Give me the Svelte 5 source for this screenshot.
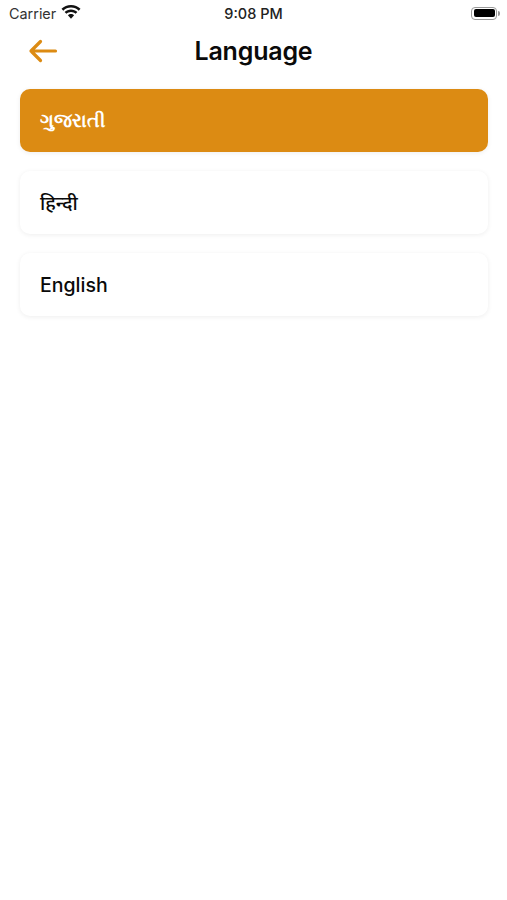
<script lang="ts">
  const languages = [
    { id: 'gu', label: 'ગુજરાતી' },
    { id: 'hi', label: 'हिन्दी' },
    { id: 'en', label: 'English' },
  ];

  let selected = $state('gu');
</script>

<div class="screen">
  <div class="status-bar">
    <div class="status-left">
      <span class="carrier">Carrier</span>
      <svg class="wifi" width="20" height="15" viewBox="0 0 20 15">
        <path d="M10 2.6c3 0 5.700 1.200 7.700 3.100l1.800-1.900C17 1.400 13.700 0 10 0S3 1.400.5 3.800l1.800 1.900C4.300 3.800 7 2.600 10 2.600z" fill="#111" />
        <path d="M10 7c1.800 0 3.400.7 4.600 1.800l1.800-1.900C14.700 5.400 12.500 4.400 10 4.400s-4.700 1-6.400 2.500l1.800 1.900C6.600 7.700 8.200 7 10 7z" fill="#111" />
        <path d="M10 9c-1.200 0-2.300.5-3.100 1.200L10 13.800l3.100-3.600C12.300 9.500 11.200 9 10 9z" fill="#111" />
      </svg>
    </div>
    <span class="time">9:08 PM</span>
    <div class="battery">
      <div class="battery-body"><div class="battery-fill"></div></div>
      <div class="battery-cap"></div>
    </div>
  </div>

  <header class="nav">
    <button class="back" type="button" aria-label="Back">
      <svg width="30" height="26" viewBox="0 0 30 26">
        <path d="M27.500 13H3M12.500 3.500 3 13l9.500 9.500" fill="none" stroke="#dc8b13" stroke-width="3.200" stroke-linecap="round" stroke-linejoin="round" />
      </svg>
    </button>
    <h1>Language</h1>
  </header>

  <div class="list">
    {#each languages as lang (lang.id)}
      <button
        class="item"
        class:active={selected === lang.id}
        type="button"
        onclick={() => (selected = lang.id)}
      >
        {lang.label}
      </button>
    {/each}
  </div>
</div>

<style>
  :global(body) {
    margin: 0;
    background: #fff;
  }

  .screen {
    height: 900px;
    background: #fff;
    font-family: Inter, "Liberation Sans", "Noto Sans", sans-serif;
    color: #0a0a0a;
    overflow: hidden;
  }

  .status-bar {
    display: flex;
    align-items: center;
    justify-content: space-between;
    height: 27px;
    padding: 0 7px 0 9px;
    position: relative;
  }

  .status-left {
    display: flex;
    align-items: center;
    gap: 5px;
  }

  .carrier {
    font-size: 14.400px;
    color: #333;
  }

  .wifi {
    margin-top: -2px;
  }

  .time {
    position: absolute;
    left: 0;
    right: 0;
    text-align: center;
    font-size: 14.500px;
    font-weight: 500;
    color: #222;
  }

  .battery {
    display: flex;
    align-items: center;
    gap: 1px;
    margin-top: -1px;
  }

  .battery-body {
    width: 26px;
    height: 13px;
    box-sizing: border-box;
    border: 1.500px solid #999;
    border-radius: 4px;
    padding: 1.500px;
  }

  .battery-fill {
    height: 100%;
    background: #000;
    border-radius: 2px;
  }

  .battery-cap {
    width: 2px;
    height: 5px;
    background: #999;
    border-radius: 0 2px 2px 0;
  }

  .nav {
    display: flex;
    align-items: center;
    justify-content: center;
    height: 48px;
    position: relative;
  }

  .nav h1 {
    margin: 0;
    font-size: 25px;
    font-weight: 600;
    letter-spacing: -0.2px;
  }

  .back {
    position: absolute;
    left: 28px;
    top: 11px;
    padding: 0;
    border: none;
    background: none;
    line-height: 0;
    cursor: pointer;
  }

  .list {
    display: flex;
    flex-direction: column;
    gap: 19px;
    padding: 14px 19px 0 20px;
  }

  .item {
    height: 63px;
    padding: 0 20px;
    border: none;
    border-radius: 10px;
    background: #fff;
    box-shadow: 0 1px 5px rgba(0, 0, 0, 0.07);
    color: #0a0a0a;
    font-family: inherit;
    font-size: 19.500px;
    font-weight: 550;
    text-align: left;
    cursor: pointer;
  }

  .item.active {
    background: #dc8b13;
    color: #fff;
    font-size: 18.500px;
    font-weight: 700;
  }
</style>
